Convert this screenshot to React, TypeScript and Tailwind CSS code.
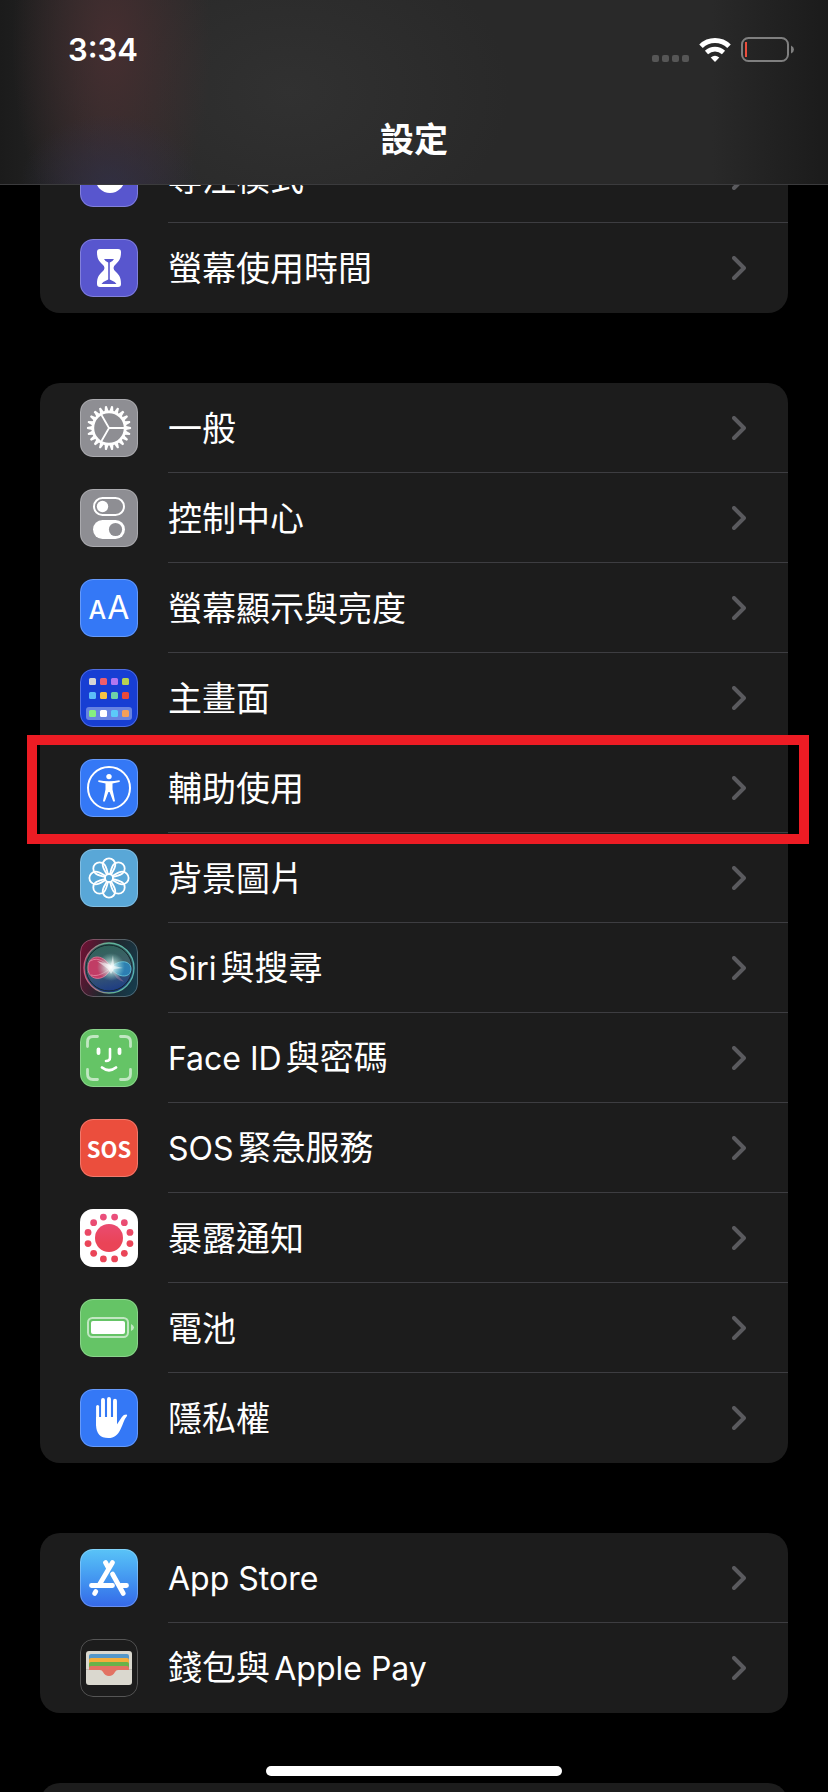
import type { ReactNode } from "react";

interface Item {
  title: string;
  icon: ReactNode;
  tile: string;
  marked?: boolean;
}

const TEETH = Array.from({ length: 22 }, (_, i) => (i * 360) / 22);
const PETALS = [0, 45, 90, 135, 180, 225, 270, 315];
const DOTS = Array.from({ length: 12 }, (_, i) => 15 + i * 30);

const HOME_APPS = [
  ["#d5d5d5", "#ee5d6c", "#b176f0", "#b5d152"],
  ["#5cbdf8", "#f7c445", "#6fd3a8", "#ea4a3b"],
  ["#86ee80", "#ffffff", "#5ccaf9", "#f5a05a"],
];
const HOME_ROWS = [9, 23, 41];

const Glyph = ({ children }: { children: ReactNode }) => (
  <svg viewBox="0 0 58 58" className="size-full" fill="none" aria-hidden="true">
    {children}
  </svg>
);

const FocusIcon = () => (
  <Glyph>
    <path d="M25 14a15 15 0 1 0 19 20a13 13 0 0 1-19-20Z" fill="#fff" />
    <circle cx="30" cy="29.500" r="14.500" fill="#fff" />
  </Glyph>
);

const HourglassIcon = () => (
  <Glyph>
    <path
      d="M20 10h18q3 0 3 3c0 7-2 9-5 12q-2.500 2-2.500 4t2.500 4c3 3 5 5 5 12q0 3-3 3H20q-3 0-3-3c0-7 2-9 5-12q2.500-2 2.500-4t-2.500-4c-3-3-5-5-5-12q0-3 3-3Z"
      fill="#fff"
    />
    <path d="M24 20h10q-1 2-4.200 3.500v17q5 2 6.700 4.500h-15q1.700-2.500 6.700-4.500v-17Q25 22 24 20Z" fill="#5856ce" />
  </Glyph>
);

const GearIcon = () => (
  <Glyph>
    <g stroke="#fff">
      <circle cx="29" cy="29" r="16.200" strokeWidth="2.800" />
      {TEETH.map((angle) => (
        <path
          key={angle}
          d="M46 27l4.800 1q.8 1 0 2L46 31Z"
          fill="#fff"
          stroke="none"
          transform={`rotate(${angle} 29 29)`}
        />
      ))}
      <path d="M29 29h15M29 29l-7.500-13M29 29l-7.500 13" strokeWidth="1.800" />
    </g>
  </Glyph>
);

const ControlIcon = () => (
  <Glyph>
    <rect x="14" y="9" width="30" height="17" rx="8.500" stroke="#fff" strokeWidth="2" />
    <circle cx="22.500" cy="17.500" r="5.700" fill="#fff" />
    <rect x="13" y="31" width="32" height="19" rx="9.500" fill="#fff" />
    <circle cx="35.500" cy="40.500" r="6.600" fill="#8e8e93" />
  </Glyph>
);

const DisplayIcon = () => (
  <span className="flex size-full items-baseline justify-center gap-px font-[Inter] leading-[58px] text-white">
    <span className="text-[25px] font-medium">A</span>
    <span className="text-[32px]">A</span>
  </span>
);

const HomeIcon = () => (
  <Glyph>
    <rect x="6" y="38" width="46" height="13" rx="3" fill="#6783e2" />
    {HOME_APPS.map((row, r) =>
      row.map((color, c) => (
        <rect key={color} x={9 + c * 11} y={HOME_ROWS[r]} width="7" height="7" rx="1.500" fill={color} />
      ))
    )}
  </Glyph>
);

const AccessibilityIcon = () => (
  <Glyph>
    <circle cx="29" cy="29" r="21" stroke="#fff" strokeWidth="2" />
    <circle cx="29" cy="17.600" r="2.700" fill="#fff" />
    <path
      d="M18.600 21.200q10.400 2 20.800 0q1 .9 0 1.800l-6.900 1.500v6l2.500 11.500q-.8 1.200-1.900.3L29.600 33h-1.200l-3.500 9.300q-1.100.9-1.900-.3l2.500-11.500v-6L18.600 23q-1-.9 0-1.800Z"
      fill="#fff"
    />
  </Glyph>
);

const WallpaperIcon = () => (
  <Glyph>
    <g stroke="#fff" strokeWidth="1.800">
      <circle cx="29" cy="29" r="4" />
      {PETALS.map((angle) => (
        <path
          key={angle}
          d="M27 25.500C25 22 22.700 19 22.700 15.700a6.300 6.300 0 0 1 12.600 0C35.300 19 33 22 31 25.500"
          transform={`rotate(${angle} 29 29)`}
        />
      ))}
    </g>
  </Glyph>
);

const SiriIcon = () => (
  <Glyph>
    <defs>
      <linearGradient id="siri-bg" x1="0" y1="0.300" x2="1" y2="0.600">
        <stop offset="0" stopColor="#6b1233" />
        <stop offset="0.500" stopColor="#20272d" />
        <stop offset="1" stopColor="#163a4a" />
      </linearGradient>
      <linearGradient id="siri-orb" x1="0.300" y1="0" x2="0.500" y2="1">
        <stop offset="0" stopColor="#2c6257" />
        <stop offset="0.500" stopColor="#41606b" />
        <stop offset="1" stopColor="#1b3a86" />
      </linearGradient>
      <linearGradient id="siri-ring" x1="0" y1="0.500" x2="1" y2="0.400">
        <stop offset="0" stopColor="#d0587e" />
        <stop offset="0.500" stopColor="#63b394" />
        <stop offset="1" stopColor="#58b5b0" />
      </linearGradient>
      <radialGradient id="siri-glow">
        <stop offset="0" stopColor="#fff" />
        <stop offset="0.250" stopColor="#eafffb" stopOpacity="0.800" />
        <stop offset="1" stopColor="#8fe0d2" stopOpacity="0" />
      </radialGradient>
    </defs>
    <rect width="58" height="58" rx="13" fill="url(#siri-bg)" />
    <circle cx="29" cy="29" r="25" fill="url(#siri-orb)" stroke="url(#siri-ring)" strokeWidth="1.300" />
    <circle cx="29" cy="29" r="23" stroke="#14262b" strokeWidth="1" />
    <path
      d="M31 29C25 15 9 14 8 28s17 16 23 1Z"
      fill="#d83765"
      fillOpacity="0.850"
      stroke="#ec7e9d"
      strokeWidth="0.800"
    />
    <path
      d="M31 29c5-8 20-9 20 1s-14 9-20-1Z"
      fill="#2b86bd"
      fillOpacity="0.850"
      stroke="#69cbe0"
      strokeWidth="0.800"
    />
    <path d="M10 22c9-5 15 2 21 7c-7 5-13 9-20 7" stroke="#f1a3b6" strokeOpacity="0.600" strokeWidth="1" />
    <path d="M31 29l13 14q-9-2-13-14L21 49" fill="#d886ad" fillOpacity="0.350" />
    <circle cx="31" cy="28" r="14" fill="url(#siri-glow)" />
    <path d="M17 22l14 4l2-10l1 11l9 2l-9 1l-3 5l-3-5Z" fill="#fff" fillOpacity="0.550" />
  </Glyph>
);

const FaceIcon = () => (
  <Glyph>
    <g stroke="#fff" strokeLinecap="round">
      <path
        d="M7.500 17.500V13q0-5.500 5.500-5.500h4.500M40.500 7.500H45q5.500 0 5.500 5.500v4.500M50.500 40.500V45q0 5.500-5.500 5.500h-4.500M17.500 50.500H13q-5.500 0-5.500-5.500v-4.500"
        strokeWidth="2.800"
        strokeOpacity="0.600"
      />
      <path d="M18.500 20.500v3.500M39.500 20.500v3.500" strokeWidth="3.800" />
      <path d="M30 20v8.500q0 3.500-4 3.500" strokeWidth="2.600" />
      <path d="M22 38.500q7 5.500 14 0" strokeWidth="2.800" />
    </g>
  </Glyph>
);

const SosIcon = () => (
  <span className="flex size-full items-center justify-center font-['Noto_Sans_CJK_TC',sans-serif] text-[22px] font-bold leading-7 text-white">
    SOS
  </span>
);

const ExposureIcon = () => (
  <Glyph>
    <defs>
      <linearGradient id="exposure" gradientUnits="userSpaceOnUse" x1="0" y1="4" x2="0" y2="54">
        <stop offset="0" stopColor="#ea5080" />
        <stop offset="0.600" stopColor="#ea4457" />
      </linearGradient>
    </defs>
    <circle cx="29" cy="29" r="14" fill="url(#exposure)" />
    {DOTS.map((angle) => (
      <circle
        key={angle}
        cx={29 + 21.7 * Math.cos((angle * Math.PI) / 180)}
        cy={29 + 21.7 * Math.sin((angle * Math.PI) / 180)}
        r="3.400"
        fill="url(#exposure)"
      />
    ))}
  </Glyph>
);

const BatteryIcon = () => (
  <Glyph>
    <g fill="#fff">
      <rect x="8" y="19" width="40" height="19" rx="4.500" fill="none" stroke="#fff" strokeWidth="2" strokeOpacity="0.600" />
      <rect x="11" y="22" width="34" height="13" rx="2" />
      <path d="M51 25q3 1.500 3 3.500t-3 3.500Z" fillOpacity="0.600" />
    </g>
  </Glyph>
);

const HandIcon = () => (
  <Glyph>
    <g stroke="#fff" strokeLinecap="round">
      <path d="M17.600 17.500V36" strokeWidth="3" />
      <path d="M23 11v25M29 10v26M35 11.700V36" strokeWidth="3.900" />
    </g>
    <path
      d="M16.100 28h20.800v7.500l5-7.500q1.800-2.500 4.600-2.400q1.200.5.300 1.600c-3 3.500-3.800 8-6 12.500c-3 6.500-6.500 9.300-12.500 9.300c-8 0-12.200-4.500-12.200-13Z"
      fill="#fff"
    />
  </Glyph>
);

const StoreIcon = () => (
  <Glyph>
    <g stroke="#fff" strokeWidth="4.800" strokeLinecap="round">
      <path d="M32.500 13.500L19.500 35.500M25.500 13.500l3 5.500M32.500 25L43.300 44.500M15.800 42.500l-1.200 2" />
      <path d="M11.500 36.500h21M41 36.500h5.500" />
    </g>
  </Glyph>
);

const WalletIcon = () => (
  <Glyph>
    <rect x="6" y="12" width="46" height="34" rx="3" fill="#dad8cf" />
    <path d="M9 31V17q0-2 2-2h36q2 0 2 2v14Z" fill="#5497c8" />
    <path d="M9 31V21q0-2 2-2h36q2 0 2 2v10Z" fill="#f3ae3c" />
    <path d="M9 31v-6q0-2 2-2h36q2 0 2 2v6Z" fill="#67b34a" />
    <path d="M9 31v-2q0-2 2-2h36q2 0 2 2v2H38q-2 0-3 2q-2 4-6 4t-6-4q-1-2-3-2Z" fill="#e27263" />
    <path d="M6 30.500h3M49 30.500h3" stroke="#b5b3ab" strokeWidth="0.800" />
  </Glyph>
);

const GROUPS: Item[][] = [
  [
    { title: "專注模式", icon: <FocusIcon />, tile: "bg-[#5856ce]" },
    { title: "螢幕使用時間", icon: <HourglassIcon />, tile: "bg-[#5856ce]" },
  ],
  [
    { title: "一般", icon: <GearIcon />, tile: "bg-[#8e8e93]" },
    { title: "控制中心", icon: <ControlIcon />, tile: "bg-[#8e8e93]" },
    { title: "螢幕顯示與亮度", icon: <DisplayIcon />, tile: "bg-[#3478f6]" },
    { title: "主畫面", icon: <HomeIcon />, tile: "bg-[#173ed3]" },
    { title: "輔助使用", icon: <AccessibilityIcon />, tile: "bg-[#3478f6]", marked: true },
    { title: "背景圖片", icon: <WallpaperIcon />, tile: "bg-[#59a7d7]" },
    { title: "Siri與搜尋", icon: <SiriIcon />, tile: "bg-[#20272d]" },
    { title: "Face ID與密碼", icon: <FaceIcon />, tile: "bg-[#65c466]" },
    { title: "SOS緊急服務", icon: <SosIcon />, tile: "bg-[#eb4e3d]" },
    { title: "暴露通知", icon: <ExposureIcon />, tile: "bg-white" },
    { title: "電池", icon: <BatteryIcon />, tile: "bg-[#65c466]" },
    { title: "隱私權", icon: <HandIcon />, tile: "bg-[#3478f6]" },
  ],
  [
    { title: "App Store", icon: <StoreIcon />, tile: "bg-linear-to-b from-[#5ac4f7] to-[#3668e8]" },
    { title: "錢包與Apple Pay", icon: <WalletIcon />, tile: "bg-[#1c1c1c]" },
  ],
];

const StatusBar = () => (
  <div className="flex items-center justify-between pt-8 pr-[34px] pl-[68px]">
    <span className="text-[31px] leading-9 font-semibold">3:34</span>
    <div className="flex items-center gap-[10px]">
      <div className="flex gap-[3px] pt-4">
        <span className="size-[7px] rounded-xs bg-[#565656]" />
        <span className="size-[7px] rounded-xs bg-[#565656]" />
        <span className="size-[7px] rounded-xs bg-[#565656]" />
        <span className="size-[7px] rounded-xs bg-[#565656]" />
      </div>
      <svg viewBox="0 0 32 24" className="h-6 w-8" fill="none" aria-hidden="true">
        <path d="M2 8.300a20 20 0 0 1 28 0" stroke="#fff" strokeWidth="5" />
        <path d="M7.500 14.500a12.400 12.400 0 0 1 17 0" stroke="#fff" strokeWidth="4.600" />
        <path d="M16 24l-4.300-4.500q4.300-3.500 8.600 0Z" fill="#fff" />
      </svg>
      <svg viewBox="0 0 53 26" className="h-[26px] w-[53px]" fill="none" aria-hidden="true">
        <rect x="1" y="1" width="46" height="23" rx="6.500" stroke="#7f7f7f" strokeWidth="2" />
        <rect x="4" y="5" width="2" height="15" fill="#eb4e3d" />
        <path d="M50 8.500q3 1.500 3 4t-3 4Z" fill="#7f7f7f" />
      </svg>
    </div>
  </div>
);

// Latin words are set a little smaller than the Chinese around them
const Title = ({ text }: { text: string }) => (
  <span className="pt-0.5 text-[34px] leading-[48px] [text-autospace:normal]">
    {text.split(/([A-Za-z ]+)/).map((part, i) =>
      i % 2 ? (
        <span key={i} className="text-[32px]">
          {part}
        </span>
      ) : (
        part
      )
    )}
  </span>
);

const Row = ({ title, icon, tile, marked = false }: Item) => (
  <li className="group relative">
    <a href="#" className="flex h-[90px] items-center pl-10">
      <span className={`relative size-[58px] shrink-0 overflow-hidden rounded-[13px] ${tile}`}>
        {icon}
        <span className="absolute inset-0 rounded-[13px] border border-white/25" />
      </span>
      <span className="ml-[30px] flex h-full grow items-center justify-between border-b border-[#3d3d41] pr-[42px] group-last:border-transparent">
        <Title text={title} />
        <svg viewBox="0 0 14 24" className="h-6 w-[14px]" fill="none" aria-hidden="true">
          <path d="M2 2l10 10L2 22" stroke="#5a5a5e" strokeWidth="4" strokeLinecap="round" strokeLinejoin="round" />
        </svg>
      </span>
    </a>
    {marked && (
      <span className="pointer-events-none absolute -top-2 -right-[21px] -bottom-[11px] -left-[13px] z-10 border-10 border-[#ed1c24]" />
    )}
  </li>
);

const App = () => {
  return (
    <div className="relative h-screen overflow-hidden bg-black font-[Inter,'Noto_Sans_CJK_TC',sans-serif] text-white">
      <header className="absolute inset-x-0 top-0 z-20 h-[185px] border-b border-[#3b3b3d] bg-[#282828] bg-[radial-gradient(90px_70px_at_110px_100%,#303048bb,transparent),radial-gradient(100px_210px_at_112px_25%,#452e30,transparent),radial-gradient(220px_160px_at_290px_50%,#313131,transparent),linear-gradient(90deg,#1b1b1b,#292929_12%,#292929_86%,#1b1b1b)]">
        <StatusBar />
        <h1 className="pt-12 text-center text-[34px] leading-[48px] font-bold">設定</h1>
      </header>

      <main className="flex flex-col gap-[70px] px-10 pt-[133px]">
        {GROUPS.map((group) => (
          <ul key={group[0].title} className="rounded-[20px] bg-[#1c1c1c]">
            {group.map((item) => (
              <Row key={item.title} {...item} />
            ))}
          </ul>
        ))}
        <div className="h-[90px] rounded-[20px] bg-[#1c1c1c]" />
      </main>

      <div className="absolute inset-x-0 bottom-4 z-20 mx-auto h-[10px] w-[296px] rounded-full bg-white" />
    </div>
  );
};

export default App;
